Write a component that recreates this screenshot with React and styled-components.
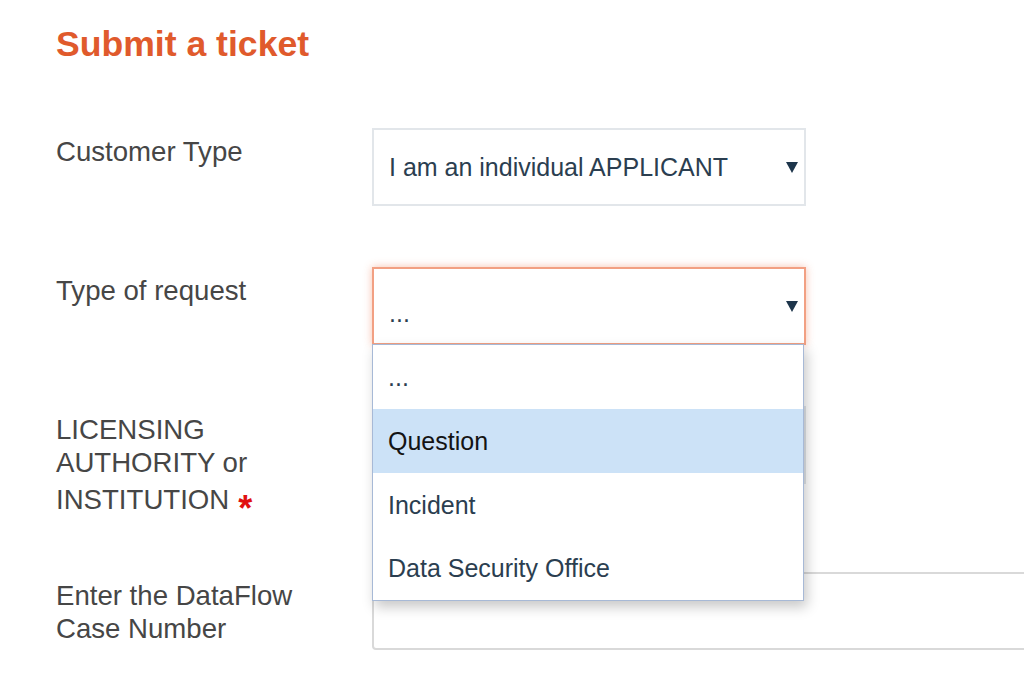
import React from 'react';
import styled, { createGlobalStyle } from 'styled-components';

const Global = createGlobalStyle`
  html, body { margin: 0; padding: 0; background: #fff; overflow: hidden; }
  body { font-family: "Liberation Sans", Arial, sans-serif; }
`;

const Page = styled.main`
  padding: 25px 0 0 56px;
  width: 1300px;
`;

const Title = styled.h1`
  margin: 0;
  font-size: 35.6px;
  line-height: 39px;
  font-weight: 700;
  color: #e05a2c;
`;

const Form = styled.form`
  margin-top: 64px;
  display: flex;
  flex-direction: column;
`;

const Row = styled.div`
  display: grid;
  grid-template-columns: 316px auto;
  align-items: start;
  margin-bottom: ${(p) => p.$gap}px;
`;

const Label = styled.label`
  width: 262px;
  padding-top: 7px;
  font-size: 27.6px;
  line-height: 33px;
  color: #464646;
`;

const LastLine = styled.span`
  display: block;
  padding-top: 4px;
`;

const Required = styled.span`
  color: #e01010;
  font-weight: 700;
  font-size: 36px;
  line-height: 30px;
  vertical-align: -12px;
  margin-left: 9px;
`;

const Field = styled.div`
  position: relative;
`;

const SelectBox = styled.div`
  box-sizing: border-box;
  width: 434px;
  height: 78px;
  display: flex;
  align-items: center;
  justify-content: space-between;
  padding: 0 6px 0 15px;
  background: #fff;
  font-size: 25px;
  color: #2b3e50;
  border: 2px solid ${(p) => (p.$focused ? '#f2a083' : '#e2e6ea')};
  box-shadow: ${(p) => (p.$focused ? '0 0 8px rgba(238, 118, 78, 0.45)' : 'none')};
`;

const Value = styled.span`
  padding-top: ${(p) => (p.$low ? '14px' : '0')};
`;

const Arrow = styled.svg`
  width: 12px;
  height: 12px;
  flex: none;
`;

const List = styled.ul`
  position: absolute;
  z-index: 2;
  top: 77px;
  left: 0;
  width: 432px;
  margin: 0;
  padding: 0;
  list-style: none;
  background: #fff;
  border: 1px solid #a7b9d6;
  box-sizing: border-box;
  box-shadow: 3px 6px 12px rgba(0, 0, 0, 0.22);
`;

const Option = styled.li`
  height: ${(p) => p.$h}px;
  display: flex;
  align-items: center;
  padding-left: 15px;
  font-size: 25px;
  color: ${(p) => (p.$active ? '#141414' : '#2b3e50')};
  background: ${(p) => (p.$active ? '#cce2f7' : '#fff')};
`;

const TextInput = styled.div`
  box-sizing: border-box;
  width: 720px;
  height: 78px;
  border: 2px solid #d9d9d9;
  border-radius: 4px;
  background: #fff;
`;

const Caret = () => (
  <Arrow viewBox="0 0 12 12" aria-hidden="true">
    <path d="M0 1 L12 1 L6 12 Z" fill="#1d354b" />
  </Arrow>
);

const options = [
  { label: '...', h: 64 },
  { label: 'Question', h: 64, active: true },
  { label: 'Incident', h: 64 },
  { label: 'Data Security Office', h: 63 },
];

export default function App() {
  return (
    <>
      <Global />
      <Page>
        <Title>Submit a ticket</Title>
        <Form>
          <Row $gap={61}>
            <Label>Customer Type</Label>
            <Field>
              <SelectBox>
                <Value>I am an individual APPLICANT</Value>
                <Caret />
              </SelectBox>
            </Field>
          </Row>
          <Row $gap={61}>
            <Label>Type of request</Label>
            <Field>
              <SelectBox $focused>
                <Value $low>...</Value>
                <Caret />
              </SelectBox>
              <List>
                {options.map((o) => (
                  <Option key={o.label} $h={o.h} $active={o.active}>
                    {o.label}
                  </Option>
                ))}
              </List>
            </Field>
          </Row>
          <Row $gap={48}>
            <Label>
              LICENSING AUTHORITY or
              <LastLine>
                INSTITUTION<Required>*</Required>
              </LastLine>
            </Label>
            <Field>
              <SelectBox>
                <Value />
                <Caret />
              </SelectBox>
            </Field>
          </Row>
          <Row $gap={0}>
            <Label>Enter the DataFlow Case Number</Label>
            <Field>
              <TextInput />
            </Field>
          </Row>
        </Form>
      </Page>
    </>
  );
}
